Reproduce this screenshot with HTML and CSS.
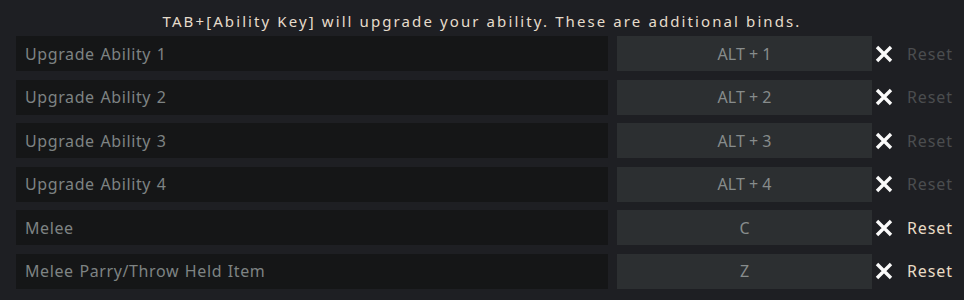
FILE: index.html
```html
<!DOCTYPE html>
<html lang="en">

<head>
  <meta charset="UTF-8">
  <title>Keybinds</title>
  <link rel="stylesheet" href="styles.css">
</head>

<body>
  <div class="binds">
    <p class="hint">TAB+[Ability Key] will upgrade your ability. These are additional binds.</p>

    <div class="bind-row">
      <div class="bind-name">Upgrade Ability 1</div>
      <div class="bind-key">ALT + 1</div>
      <span class="clear"><svg viewBox="0 0 18 18"><path d="M2 2 L16 16 M16 2 L2 16" /></svg></span>
      <span class="reset disabled">Reset</span>
    </div>
    <div class="bind-row">
      <div class="bind-name">Upgrade Ability 2</div>
      <div class="bind-key">ALT + 2</div>
      <span class="clear"><svg viewBox="0 0 18 18"><path d="M2 2 L16 16 M16 2 L2 16" /></svg></span>
      <span class="reset disabled">Reset</span>
    </div>
    <div class="bind-row">
      <div class="bind-name">Upgrade Ability 3</div>
      <div class="bind-key">ALT + 3</div>
      <span class="clear"><svg viewBox="0 0 18 18"><path d="M2 2 L16 16 M16 2 L2 16" /></svg></span>
      <span class="reset disabled">Reset</span>
    </div>
    <div class="bind-row">
      <div class="bind-name">Upgrade Ability 4</div>
      <div class="bind-key">ALT + 4</div>
      <span class="clear"><svg viewBox="0 0 18 18"><path d="M2 2 L16 16 M16 2 L2 16" /></svg></span>
      <span class="reset disabled">Reset</span>
    </div>
    <div class="bind-row">
      <div class="bind-name">Melee</div>
      <div class="bind-key">C</div>
      <span class="clear"><svg viewBox="0 0 18 18"><path d="M2 2 L16 16 M16 2 L2 16" /></svg></span>
      <span class="reset">Reset</span>
    </div>
    <div class="bind-row">
      <div class="bind-name">Melee Parry/Throw Held Item</div>
      <div class="bind-key">Z</div>
      <span class="clear"><svg viewBox="0 0 18 18"><path d="M2 2 L16 16 M16 2 L2 16" /></svg></span>
      <span class="reset">Reset</span>
    </div>
  </div>
</body>

</html>
```

FILE: styles.css
```css
body {
  margin: 0;
  background-color: #1e1f23;
  font-family: "Noto Sans", "Open Sans", sans-serif;
}

.binds {
  padding: 0 0 0 16px;
  display: flex;
  flex-direction: column;
  gap: 8.6px;
}

.hint {
  margin: 0;
  height: 36px;
  margin-bottom: -8.6px;
  line-height: 42px;
  text-align: center;
  color: #e6dccb;
  font-size: 15px;
  letter-spacing: 2.1px;
  padding-right: 16px;
}

.bind-row {
  display: flex;
  align-items: center;
  height: 35px;
}

.bind-name {
  width: 592px;
  height: 100%;
  box-sizing: border-box;
  padding-left: 9px;
  display: flex;
  align-items: center;
  background-color: #151617;
  color: #7e8383;
  font-size: 16px;
  letter-spacing: 0.6px;
  word-spacing: 1px;
}

.bind-key {
  width: 255px;
  height: 100%;
  margin-left: 9px;
  display: flex;
  align-items: center;
  justify-content: center;
  background-color: #2c2f31;
  color: #878c8c;
  font-size: 16px;
}

.clear {
  width: 18px;
  height: 18px;
  margin-left: 3px;
}

.clear svg {
  display: block;
  width: 18px;
  height: 18px;
  stroke: #fafafa;
  stroke-width: 3.4;
  fill: none;
}

.reset {
  margin-left: 14px;
  color: #e9dcc6;
  font-size: 16px;
  letter-spacing: 0.9px;
}

.reset.disabled {
  color: #4b4d4f;
}
```
